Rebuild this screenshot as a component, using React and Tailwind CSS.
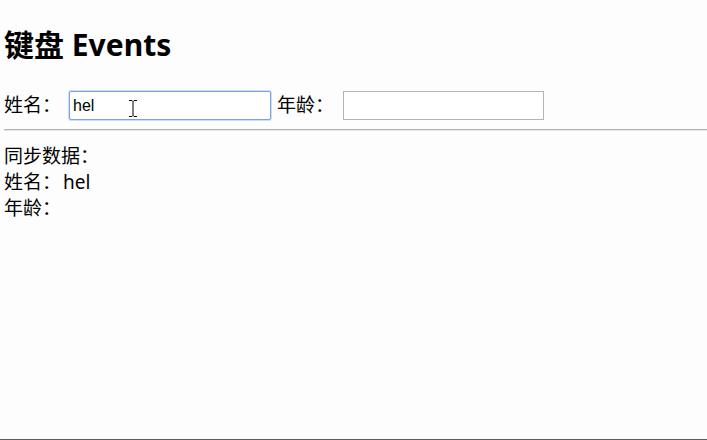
import React from "react";

const font = { fontFamily: '"Noto Sans", "Noto Sans CJK SC", sans-serif' };

function IBeam() {
  return (
    <svg className="absolute left-[128px] top-[100px]" width="10" height="17" viewBox="0 0 10 17">
      <path d="M1 0.5h3l1 1 1-1h3M5 1.5v14M1 16.5h3l1-1 1 1h3" stroke="#000" strokeWidth="1" fill="none" />
    </svg>
  );
}

export default function App() {
  return (
    <div
      className="relative h-[440px] w-full overflow-hidden bg-[#fdfdfd] pl-[4px] text-black border-b border-[#5f5f5f]"
      style={font}
    >
      <h1 className="pt-[27px] text-[30px] font-bold leading-[36px]">键盘 Events</h1>

      <div className="mt-[28px] flex items-center text-[19px] leading-[25px]">
        <span>姓名：</span>
        <input
          readOnly
          value="hel"
          className="ml-[8px] h-[29px] w-[202px] rounded-[2px] border border-[#7ba2e4] bg-white px-[3px] text-[16px] outline-none shadow-[0_0_0_1px_rgba(123,162,228,0.35)]"
          style={{ fontFamily: '"Liberation Sans", Arial, sans-serif' }}
        />
        <span className="ml-[6px]">年龄：</span>
        <input
          readOnly
          value=""
          className="ml-[9px] h-[29px] w-[201px] border border-[#b4b4b4] bg-white px-[3px] text-[16px] outline-none"
        />
      </div>

      <div className="mt-[9px] h-[2px] border-t border-b border-t-[#b0b0b0] border-b-[#e8e8e8]" />

      <div className="mt-[12px] text-[19px] leading-[26px]">
        <div>同步数据：</div>
        <div>
          姓名：<span className="ml-[2px]">hel</span>
        </div>
        <div>年龄：</div>
      </div>

      <IBeam />
    </div>
  );
}
